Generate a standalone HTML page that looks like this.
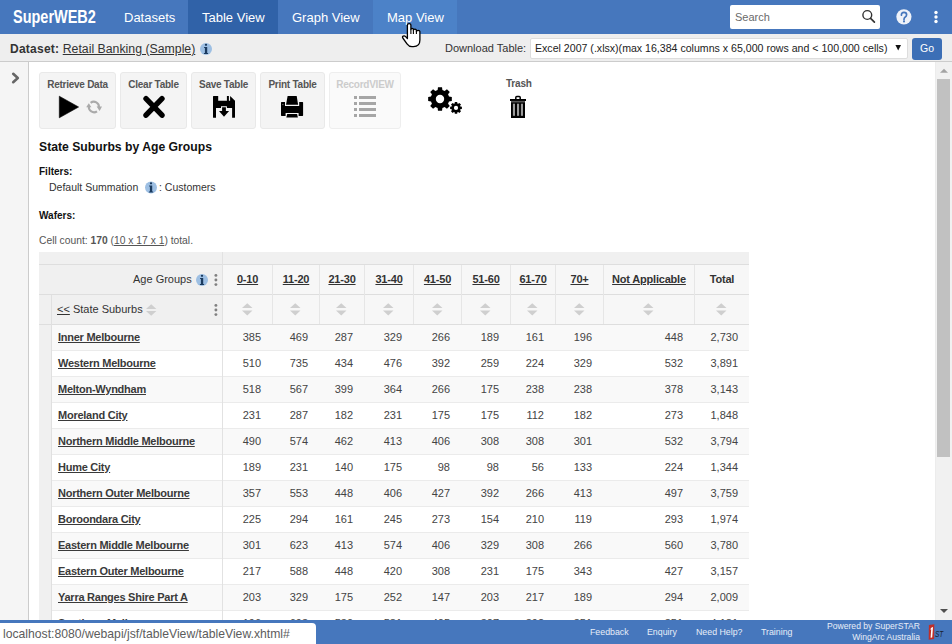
<!DOCTYPE html>
<html><head><meta charset="utf-8">
<style>
*{box-sizing:border-box;margin:0;padding:0}
html,body{width:952px;height:644px;overflow:hidden;background:#fff;font-family:"Liberation Sans",sans-serif;color:#333}
.a{position:absolute;white-space:nowrap}
#nav{position:absolute;left:0;top:0;width:952px;height:34px;background:#4677bd}
.tab{position:absolute;top:0;height:34px;color:#fff;font-size:13px;line-height:34px;padding-top:1px}
#sub{position:absolute;left:0;top:34px;width:952px;height:28px;background:#eee;border-bottom:1px solid #ccc}
#side{position:absolute;left:0;top:62px;width:29px;height:558px;background:#f5f5f5;border-right:1px solid #ccc}
#sb{position:absolute;left:935px;top:62px;width:17px;height:558px;background:#f1f1f1;border-left:1px solid #ececec}
.btn{position:absolute;top:72px;height:57px;background:#f4f4f4;border:1px solid #e9e9e9;border-radius:3px}
.bl{position:absolute;top:5.5px;left:0;width:100%;text-align:center;font-size:10px;font-weight:bold;color:#555;line-height:12px;letter-spacing:-0.25px}
#foot{position:absolute;left:0;top:620px;width:952px;height:24px;background:#4677bd}
.fl{position:absolute;color:#e8eef8;font-size:8.8px;line-height:12px}
table{position:absolute;left:39px;top:252px;border-collapse:collapse;table-layout:fixed;font-size:11px}
td{padding:0;border:1px solid #e4e4e4;white-space:nowrap;overflow:hidden}
.th{font-size:11px;line-height:14px;color:#333}
.hb{font-weight:bold;letter-spacing:-0.2px}
.u{text-decoration:underline}
.td{font-size:11px;line-height:16px;color:#444}
.rh{font-weight:bold;text-decoration:underline;color:#3a3a3a;letter-spacing:-0.25px}
</style></head><body>
<div id="nav">
  <div class="a" style="left:13px;top:5px;font-size:18.7px;font-weight:bold;color:#fff;line-height:24px;transform:scaleX(0.775);transform-origin:0 0">SuperWEB2</div>
  <div class="tab" style="left:110px;width:78px;padding-left:14px">Datasets</div>
  <div class="tab" style="left:188px;width:90px;background:#3062a8;padding-left:14px">Table View</div>
  <div class="tab" style="left:278px;width:95px;padding-left:14px">Graph View</div>
  <div class="tab" style="left:373px;width:84px;background:#4c82c8;padding-left:14px">Map View</div>
  <div class="a" style="left:730px;top:5px;width:150px;height:24px;background:#fff;border-radius:2px"></div>
  <div class="a" style="left:735px;top:5px;font-size:11px;line-height:24px;color:#6a6a6a">Search</div>
</div>
<div id="sub">
  <div class="a" style="left:10px;top:8px;font-size:12px;line-height:14px;color:#333"><b style="letter-spacing:0.25px">Dataset:</b> <span style="text-decoration:underline;font-size:12.3px">Retail Banking (Sample)</span></div>
  <div class="a" style="left:445px;top:7px;font-size:11px;line-height:14px;color:#333">Download Table:</div>
  <div class="a" style="left:530px;top:4px;width:378px;height:21px;background:#fff;border:1px solid #ddd;border-radius:2px"></div>
  <div class="a" style="left:535px;top:7px;font-size:10.6px;line-height:14px;color:#222">Excel 2007 (.xlsx)(max 16,384 columns x 65,000 rows and &lt; 100,000 cells)</div>
  <div class="a" style="left:912px;top:4px;width:30px;height:22px;background:#3c6fb6;border-radius:3px;color:#fff;font-size:10.5px;line-height:20px;text-align:center">Go</div>
</div>
<div id="side"></div>
<div id="sb"></div>

<div class="btn" style="left:39px;width:77px"><div class="bl">Retrieve Data</div></div>
<div class="btn" style="left:120px;width:67px"><div class="bl">Clear Table</div></div>
<div class="btn" style="left:191px;width:65px"><div class="bl">Save Table</div></div>
<div class="btn" style="left:260px;width:65px"><div class="bl">Print Table</div></div>
<div class="btn" style="left:329px;width:72px;background:#fafafa;border-color:#eee"><div class="bl" style="color:#ccc">RecordVIEW</div></div>
<div class="a" style="left:506px;top:78px;font-size:10px;font-weight:bold;color:#555;line-height:12px;letter-spacing:-0.2px">Trash</div>

<div class="a" style="left:39px;top:140px;font-size:12.2px;font-weight:bold;color:#111;line-height:14px">State Suburbs by Age Groups</div>
<div class="a" style="left:39px;top:166px;font-size:10px;font-weight:bold;color:#111;line-height:12px">Filters:</div>
<div class="a" style="left:49px;top:180px;font-size:10.5px;color:#333;line-height:14px">Default Summation</div>
<div class="a" style="left:159px;top:180px;font-size:10.5px;color:#333;line-height:14px">: Customers</div>
<div class="a" style="left:39px;top:210px;font-size:10px;font-weight:bold;color:#111;line-height:12px">Wafers:</div>
<div class="a" style="left:39px;top:234px;font-size:10.3px;color:#555;line-height:14px">Cell count: <b>170</b> (<u>10 x 17 x 1</u>) total.</div>

<div class="a" style="left:39px;top:252px;width:710px;height:12px;background:#f0f0f0"></div>
<div class="a" style="left:39px;top:265px;width:183px;height:59px;background:#f0f0f0"></div>
<div class="a" style="left:223px;top:265px;width:526px;height:59px;background:#f7f7f7"></div>
<div class="a" style="left:52px;top:325px;width:697px;height:25px;background:#f9f9f9"></div>
<div class="a" style="left:52px;top:351px;width:697px;height:25px;background:#fff"></div>
<div class="a" style="left:52px;top:377px;width:697px;height:25px;background:#f9f9f9"></div>
<div class="a" style="left:52px;top:403px;width:697px;height:25px;background:#fff"></div>
<div class="a" style="left:52px;top:429px;width:697px;height:25px;background:#f9f9f9"></div>
<div class="a" style="left:52px;top:455px;width:697px;height:25px;background:#fff"></div>
<div class="a" style="left:52px;top:481px;width:697px;height:25px;background:#f9f9f9"></div>
<div class="a" style="left:52px;top:507px;width:697px;height:25px;background:#fff"></div>
<div class="a" style="left:52px;top:533px;width:697px;height:25px;background:#f9f9f9"></div>
<div class="a" style="left:52px;top:559px;width:697px;height:25px;background:#fff"></div>
<div class="a" style="left:52px;top:585px;width:697px;height:25px;background:#f9f9f9"></div>
<div class="a" style="left:52px;top:611px;width:697px;height:25px;background:#fff"></div>
<div class="a" style="left:39px;top:325px;width:12px;height:295px;background:#f0f0f0"></div>
<div class="a" style="left:39px;top:264px;width:710px;height:1px;background:#dedede"></div>
<div class="a" style="left:39px;top:294px;width:710px;height:1px;background:#dedede"></div>
<div class="a" style="left:39px;top:324px;width:710px;height:1px;background:#dedede"></div>
<div class="a" style="left:52px;top:350px;width:697px;height:1px;background:#ebebeb"></div>
<div class="a" style="left:52px;top:376px;width:697px;height:1px;background:#ebebeb"></div>
<div class="a" style="left:52px;top:402px;width:697px;height:1px;background:#ebebeb"></div>
<div class="a" style="left:52px;top:428px;width:697px;height:1px;background:#ebebeb"></div>
<div class="a" style="left:52px;top:454px;width:697px;height:1px;background:#ebebeb"></div>
<div class="a" style="left:52px;top:480px;width:697px;height:1px;background:#ebebeb"></div>
<div class="a" style="left:52px;top:506px;width:697px;height:1px;background:#ebebeb"></div>
<div class="a" style="left:52px;top:532px;width:697px;height:1px;background:#ebebeb"></div>
<div class="a" style="left:52px;top:558px;width:697px;height:1px;background:#ebebeb"></div>
<div class="a" style="left:52px;top:584px;width:697px;height:1px;background:#ebebeb"></div>
<div class="a" style="left:52px;top:610px;width:697px;height:1px;background:#ebebeb"></div>
<div class="a" style="left:52px;top:636px;width:697px;height:1px;background:#ebebeb"></div>
<div class="a" style="left:222px;top:252px;width:1px;height:368px;background:#e2e2e2"></div>
<div class="a" style="left:51px;top:295px;width:1px;height:325px;background:#e0e0e0"></div>
<div class="a" style="left:272px;top:265px;width:1px;height:59px;background:#e6e6e6"></div>
<div class="a" style="left:319px;top:265px;width:1px;height:59px;background:#e6e6e6"></div>
<div class="a" style="left:364px;top:265px;width:1px;height:59px;background:#e6e6e6"></div>
<div class="a" style="left:413px;top:265px;width:1px;height:59px;background:#e6e6e6"></div>
<div class="a" style="left:461px;top:265px;width:1px;height:59px;background:#e6e6e6"></div>
<div class="a" style="left:510px;top:265px;width:1px;height:59px;background:#e6e6e6"></div>
<div class="a" style="left:555px;top:265px;width:1px;height:59px;background:#e6e6e6"></div>
<div class="a" style="left:603px;top:265px;width:1px;height:59px;background:#e6e6e6"></div>
<div class="a" style="left:694px;top:265px;width:1px;height:59px;background:#e6e6e6"></div>
<div class="a th" style="left:133px;top:272px">Age Groups</div>
<div class="a th" style="left:57px;top:302px"><u>&lt;&lt;</u> State Suburbs</div>
<div class="a th hb u" style="left:223px;top:272px;width:49px;text-align:center">0-10</div>
<svg class="a" style="left:241.5px;top:302.5px" width="11" height="13" viewBox="0 0 11 13"><path d="M5.25 0.3 L10.5 5.1 L0 5.1 Z M0 7.6 L10.5 7.6 L5.25 12.6 Z" fill="#cfcfcf"/></svg>
<div class="a th hb u" style="left:273px;top:272px;width:46px;text-align:center">11-20</div>
<svg class="a" style="left:290.0px;top:302.5px" width="11" height="13" viewBox="0 0 11 13"><path d="M5.25 0.3 L10.5 5.1 L0 5.1 Z M0 7.6 L10.5 7.6 L5.25 12.6 Z" fill="#cfcfcf"/></svg>
<div class="a th hb u" style="left:320px;top:272px;width:44px;text-align:center">21-30</div>
<svg class="a" style="left:336.0px;top:302.5px" width="11" height="13" viewBox="0 0 11 13"><path d="M5.25 0.3 L10.5 5.1 L0 5.1 Z M0 7.6 L10.5 7.6 L5.25 12.6 Z" fill="#cfcfcf"/></svg>
<div class="a th hb u" style="left:365px;top:272px;width:48px;text-align:center">31-40</div>
<svg class="a" style="left:383.0px;top:302.5px" width="11" height="13" viewBox="0 0 11 13"><path d="M5.25 0.3 L10.5 5.1 L0 5.1 Z M0 7.6 L10.5 7.6 L5.25 12.6 Z" fill="#cfcfcf"/></svg>
<div class="a th hb u" style="left:414px;top:272px;width:47px;text-align:center">41-50</div>
<svg class="a" style="left:431.5px;top:302.5px" width="11" height="13" viewBox="0 0 11 13"><path d="M5.25 0.3 L10.5 5.1 L0 5.1 Z M0 7.6 L10.5 7.6 L5.25 12.6 Z" fill="#cfcfcf"/></svg>
<div class="a th hb u" style="left:462px;top:272px;width:48px;text-align:center">51-60</div>
<svg class="a" style="left:480.0px;top:302.5px" width="11" height="13" viewBox="0 0 11 13"><path d="M5.25 0.3 L10.5 5.1 L0 5.1 Z M0 7.6 L10.5 7.6 L5.25 12.6 Z" fill="#cfcfcf"/></svg>
<div class="a th hb u" style="left:511px;top:272px;width:44px;text-align:center">61-70</div>
<svg class="a" style="left:527.0px;top:302.5px" width="11" height="13" viewBox="0 0 11 13"><path d="M5.25 0.3 L10.5 5.1 L0 5.1 Z M0 7.6 L10.5 7.6 L5.25 12.6 Z" fill="#cfcfcf"/></svg>
<div class="a th hb u" style="left:556px;top:272px;width:47px;text-align:center">70+</div>
<svg class="a" style="left:573.5px;top:302.5px" width="11" height="13" viewBox="0 0 11 13"><path d="M5.25 0.3 L10.5 5.1 L0 5.1 Z M0 7.6 L10.5 7.6 L5.25 12.6 Z" fill="#cfcfcf"/></svg>
<div class="a th hb u" style="left:604px;top:272px;width:90px;text-align:center">Not Applicable</div>
<svg class="a" style="left:643.0px;top:302.5px" width="11" height="13" viewBox="0 0 11 13"><path d="M5.25 0.3 L10.5 5.1 L0 5.1 Z M0 7.6 L10.5 7.6 L5.25 12.6 Z" fill="#cfcfcf"/></svg>
<div class="a th hb" style="left:695px;top:272px;width:54px;text-align:center">Total</div>
<svg class="a" style="left:716.0px;top:302.5px" width="11" height="13" viewBox="0 0 11 13"><path d="M5.25 0.3 L10.5 5.1 L0 5.1 Z M0 7.6 L10.5 7.6 L5.25 12.6 Z" fill="#cfcfcf"/></svg>
<div class="a td rh" style="left:58px;top:329px">Inner Melbourne</div>
<div class="a td" style="left:192px;top:329px;width:69px;text-align:right">385</div>
<div class="a td" style="left:239px;top:329px;width:69px;text-align:right">469</div>
<div class="a td" style="left:284px;top:329px;width:69px;text-align:right">287</div>
<div class="a td" style="left:333px;top:329px;width:69px;text-align:right">329</div>
<div class="a td" style="left:381px;top:329px;width:69px;text-align:right">266</div>
<div class="a td" style="left:430px;top:329px;width:69px;text-align:right">189</div>
<div class="a td" style="left:475px;top:329px;width:69px;text-align:right">161</div>
<div class="a td" style="left:523px;top:329px;width:69px;text-align:right">196</div>
<div class="a td" style="left:614px;top:329px;width:69px;text-align:right">448</div>
<div class="a td" style="left:669px;top:329px;width:69px;text-align:right">2,730</div>
<div class="a td rh" style="left:58px;top:355px">Western Melbourne</div>
<div class="a td" style="left:192px;top:355px;width:69px;text-align:right">510</div>
<div class="a td" style="left:239px;top:355px;width:69px;text-align:right">735</div>
<div class="a td" style="left:284px;top:355px;width:69px;text-align:right">434</div>
<div class="a td" style="left:333px;top:355px;width:69px;text-align:right">476</div>
<div class="a td" style="left:381px;top:355px;width:69px;text-align:right">392</div>
<div class="a td" style="left:430px;top:355px;width:69px;text-align:right">259</div>
<div class="a td" style="left:475px;top:355px;width:69px;text-align:right">224</div>
<div class="a td" style="left:523px;top:355px;width:69px;text-align:right">329</div>
<div class="a td" style="left:614px;top:355px;width:69px;text-align:right">532</div>
<div class="a td" style="left:669px;top:355px;width:69px;text-align:right">3,891</div>
<div class="a td rh" style="left:58px;top:381px">Melton-Wyndham</div>
<div class="a td" style="left:192px;top:381px;width:69px;text-align:right">518</div>
<div class="a td" style="left:239px;top:381px;width:69px;text-align:right">567</div>
<div class="a td" style="left:284px;top:381px;width:69px;text-align:right">399</div>
<div class="a td" style="left:333px;top:381px;width:69px;text-align:right">364</div>
<div class="a td" style="left:381px;top:381px;width:69px;text-align:right">266</div>
<div class="a td" style="left:430px;top:381px;width:69px;text-align:right">175</div>
<div class="a td" style="left:475px;top:381px;width:69px;text-align:right">238</div>
<div class="a td" style="left:523px;top:381px;width:69px;text-align:right">238</div>
<div class="a td" style="left:614px;top:381px;width:69px;text-align:right">378</div>
<div class="a td" style="left:669px;top:381px;width:69px;text-align:right">3,143</div>
<div class="a td rh" style="left:58px;top:407px">Moreland City</div>
<div class="a td" style="left:192px;top:407px;width:69px;text-align:right">231</div>
<div class="a td" style="left:239px;top:407px;width:69px;text-align:right">287</div>
<div class="a td" style="left:284px;top:407px;width:69px;text-align:right">182</div>
<div class="a td" style="left:333px;top:407px;width:69px;text-align:right">231</div>
<div class="a td" style="left:381px;top:407px;width:69px;text-align:right">175</div>
<div class="a td" style="left:430px;top:407px;width:69px;text-align:right">175</div>
<div class="a td" style="left:475px;top:407px;width:69px;text-align:right">112</div>
<div class="a td" style="left:523px;top:407px;width:69px;text-align:right">182</div>
<div class="a td" style="left:614px;top:407px;width:69px;text-align:right">273</div>
<div class="a td" style="left:669px;top:407px;width:69px;text-align:right">1,848</div>
<div class="a td rh" style="left:58px;top:433px">Northern Middle Melbourne</div>
<div class="a td" style="left:192px;top:433px;width:69px;text-align:right">490</div>
<div class="a td" style="left:239px;top:433px;width:69px;text-align:right">574</div>
<div class="a td" style="left:284px;top:433px;width:69px;text-align:right">462</div>
<div class="a td" style="left:333px;top:433px;width:69px;text-align:right">413</div>
<div class="a td" style="left:381px;top:433px;width:69px;text-align:right">406</div>
<div class="a td" style="left:430px;top:433px;width:69px;text-align:right">308</div>
<div class="a td" style="left:475px;top:433px;width:69px;text-align:right">308</div>
<div class="a td" style="left:523px;top:433px;width:69px;text-align:right">301</div>
<div class="a td" style="left:614px;top:433px;width:69px;text-align:right">532</div>
<div class="a td" style="left:669px;top:433px;width:69px;text-align:right">3,794</div>
<div class="a td rh" style="left:58px;top:459px">Hume City</div>
<div class="a td" style="left:192px;top:459px;width:69px;text-align:right">189</div>
<div class="a td" style="left:239px;top:459px;width:69px;text-align:right">231</div>
<div class="a td" style="left:284px;top:459px;width:69px;text-align:right">140</div>
<div class="a td" style="left:333px;top:459px;width:69px;text-align:right">175</div>
<div class="a td" style="left:381px;top:459px;width:69px;text-align:right">98</div>
<div class="a td" style="left:430px;top:459px;width:69px;text-align:right">98</div>
<div class="a td" style="left:475px;top:459px;width:69px;text-align:right">56</div>
<div class="a td" style="left:523px;top:459px;width:69px;text-align:right">133</div>
<div class="a td" style="left:614px;top:459px;width:69px;text-align:right">224</div>
<div class="a td" style="left:669px;top:459px;width:69px;text-align:right">1,344</div>
<div class="a td rh" style="left:58px;top:485px">Northern Outer Melbourne</div>
<div class="a td" style="left:192px;top:485px;width:69px;text-align:right">357</div>
<div class="a td" style="left:239px;top:485px;width:69px;text-align:right">553</div>
<div class="a td" style="left:284px;top:485px;width:69px;text-align:right">448</div>
<div class="a td" style="left:333px;top:485px;width:69px;text-align:right">406</div>
<div class="a td" style="left:381px;top:485px;width:69px;text-align:right">427</div>
<div class="a td" style="left:430px;top:485px;width:69px;text-align:right">392</div>
<div class="a td" style="left:475px;top:485px;width:69px;text-align:right">266</div>
<div class="a td" style="left:523px;top:485px;width:69px;text-align:right">413</div>
<div class="a td" style="left:614px;top:485px;width:69px;text-align:right">497</div>
<div class="a td" style="left:669px;top:485px;width:69px;text-align:right">3,759</div>
<div class="a td rh" style="left:58px;top:511px">Boroondara City</div>
<div class="a td" style="left:192px;top:511px;width:69px;text-align:right">225</div>
<div class="a td" style="left:239px;top:511px;width:69px;text-align:right">294</div>
<div class="a td" style="left:284px;top:511px;width:69px;text-align:right">161</div>
<div class="a td" style="left:333px;top:511px;width:69px;text-align:right">245</div>
<div class="a td" style="left:381px;top:511px;width:69px;text-align:right">273</div>
<div class="a td" style="left:430px;top:511px;width:69px;text-align:right">154</div>
<div class="a td" style="left:475px;top:511px;width:69px;text-align:right">210</div>
<div class="a td" style="left:523px;top:511px;width:69px;text-align:right">119</div>
<div class="a td" style="left:614px;top:511px;width:69px;text-align:right">293</div>
<div class="a td" style="left:669px;top:511px;width:69px;text-align:right">1,974</div>
<div class="a td rh" style="left:58px;top:537px">Eastern Middle Melbourne</div>
<div class="a td" style="left:192px;top:537px;width:69px;text-align:right">301</div>
<div class="a td" style="left:239px;top:537px;width:69px;text-align:right">623</div>
<div class="a td" style="left:284px;top:537px;width:69px;text-align:right">413</div>
<div class="a td" style="left:333px;top:537px;width:69px;text-align:right">574</div>
<div class="a td" style="left:381px;top:537px;width:69px;text-align:right">406</div>
<div class="a td" style="left:430px;top:537px;width:69px;text-align:right">329</div>
<div class="a td" style="left:475px;top:537px;width:69px;text-align:right">308</div>
<div class="a td" style="left:523px;top:537px;width:69px;text-align:right">266</div>
<div class="a td" style="left:614px;top:537px;width:69px;text-align:right">560</div>
<div class="a td" style="left:669px;top:537px;width:69px;text-align:right">3,780</div>
<div class="a td rh" style="left:58px;top:563px">Eastern Outer Melbourne</div>
<div class="a td" style="left:192px;top:563px;width:69px;text-align:right">217</div>
<div class="a td" style="left:239px;top:563px;width:69px;text-align:right">588</div>
<div class="a td" style="left:284px;top:563px;width:69px;text-align:right">448</div>
<div class="a td" style="left:333px;top:563px;width:69px;text-align:right">420</div>
<div class="a td" style="left:381px;top:563px;width:69px;text-align:right">308</div>
<div class="a td" style="left:430px;top:563px;width:69px;text-align:right">231</div>
<div class="a td" style="left:475px;top:563px;width:69px;text-align:right">175</div>
<div class="a td" style="left:523px;top:563px;width:69px;text-align:right">343</div>
<div class="a td" style="left:614px;top:563px;width:69px;text-align:right">427</div>
<div class="a td" style="left:669px;top:563px;width:69px;text-align:right">3,157</div>
<div class="a td rh" style="left:58px;top:589px">Yarra Ranges Shire Part A</div>
<div class="a td" style="left:192px;top:589px;width:69px;text-align:right">203</div>
<div class="a td" style="left:239px;top:589px;width:69px;text-align:right">329</div>
<div class="a td" style="left:284px;top:589px;width:69px;text-align:right">175</div>
<div class="a td" style="left:333px;top:589px;width:69px;text-align:right">252</div>
<div class="a td" style="left:381px;top:589px;width:69px;text-align:right">147</div>
<div class="a td" style="left:430px;top:589px;width:69px;text-align:right">203</div>
<div class="a td" style="left:475px;top:589px;width:69px;text-align:right">217</div>
<div class="a td" style="left:523px;top:589px;width:69px;text-align:right">189</div>
<div class="a td" style="left:614px;top:589px;width:69px;text-align:right">294</div>
<div class="a td" style="left:669px;top:589px;width:69px;text-align:right">2,009</div>
<div class="a td rh" style="left:58px;top:615px">Southern Melbourne</div>
<div class="a td" style="left:192px;top:615px;width:69px;text-align:right">196</div>
<div class="a td" style="left:239px;top:615px;width:69px;text-align:right">693</div>
<div class="a td" style="left:284px;top:615px;width:69px;text-align:right">530</div>
<div class="a td" style="left:333px;top:615px;width:69px;text-align:right">581</div>
<div class="a td" style="left:381px;top:615px;width:69px;text-align:right">405</div>
<div class="a td" style="left:430px;top:615px;width:69px;text-align:right">307</div>
<div class="a td" style="left:475px;top:615px;width:69px;text-align:right">392</div>
<div class="a td" style="left:523px;top:615px;width:69px;text-align:right">351</div>
<div class="a td" style="left:614px;top:615px;width:69px;text-align:right">351</div>
<div class="a td" style="left:669px;top:615px;width:69px;text-align:right">4,181</div>
<div id="foot">
  <div class="fl" style="left:590px;top:6px">Feedback</div>
  <div class="fl" style="left:647px;top:6px">Enquiry</div>
  <div class="fl" style="left:696px;top:6px">Need Help?</div>
  <div class="fl" style="left:761px;top:6px">Training</div>
  <div class="fl" style="left:800px;top:1px;width:120px;text-align:right;font-size:8.6px;line-height:10.5px">Powered by SuperSTAR<br>WingArc Australia</div>
</div>
<div class="a" style="left:0;top:623px;width:316px;height:21px;background:#fff;border-top-right-radius:4px;font-size:12.2px;line-height:23px;color:#5c5c5c;padding-left:3px">localhost:8080/webapi/jsf/tableView/tableView.xhtml#</div>
<svg class="a" style="left:0;top:0" width="952" height="644" viewBox="0 0 952 644">
<path d="M13.2,73.8 L17.8,78 L13.2,82.2" fill="none" stroke="#666" stroke-width="2.6" stroke-linecap="round" stroke-linejoin="round"/>
<path d="M59.3,96.2 L78.6,107 L59.3,117.8 Z" fill="#000" stroke="#000" stroke-width="0.6" stroke-linejoin="round"/>
<path d="M90.6,102.8 A5.2,5.2 0 0 1 98.9,107.6" fill="none" stroke="#aaa" stroke-width="2.1"/>
<path d="M96.6,106.6 L102,106.6 L99.6,110.9 Z" fill="#aaa"/>
<path d="M97,111.3 A5.2,5.2 0 0 1 88.9,106.2" fill="none" stroke="#aaa" stroke-width="2.1"/>
<path d="M86.2,107.3 L91.4,107.3 L88.8,103.2 Z" fill="#aaa"/>
<path d="M146,98.6 L162,115.2 M162,98.6 L146,115.2" fill="none" stroke="#000" stroke-width="5.4" stroke-linecap="round"/>
<g transform="translate(213,96)"><path d="M0.6,0 H5.2 V4.7 H13.9 V0 H15.9 V4.7 H17.1 V0 L22,4.7 V21.2 Q22,21.8 21.4,21.8 H19.1 V11.9 H13.9 V10.2 H8 V11.9 H3 V21.8 H0.6 Q0,21.8 0,21.2 V0.6 Q0,0 0.6,0 Z M9.1,11.2 H12.9 V15.1 H16.1 L11,20.8 L6,15.1 H9.1 Z" fill="#000"/></g>
<path d="M281.6,102 H285 V106.1 H299.2 V102 H302.5 Q303.1,102 303.1,102.6 V115.3 Q303.1,115.9 302.5,115.9 H298.6 V113 H285.6 V115.9 H281.6 Q281,115.9 281,115.3 V102.6 Q281,102 281.6,102 Z" fill="#000"/>
<path d="M287.6,96.1 H296.7 L298.1,104.8 H286 Z" fill="#000"/>
<path d="M287.2,114.1 H297.1 L297.9,117.6 H286.3 Z" fill="#000"/>
<rect x="282.2" y="104" width="1.3" height="1.1" fill="#666"/>
<rect x="354" y="96" width="3" height="3" fill="#a6a6a6"/><rect x="359" y="96" width="17" height="3" fill="#a6a6a6"/>
<rect x="354" y="102" width="3" height="3" fill="#a6a6a6"/><rect x="359" y="102" width="17" height="3" fill="#a6a6a6"/>
<rect x="354" y="108" width="3" height="3" fill="#a6a6a6"/><rect x="359" y="108" width="17" height="3" fill="#a6a6a6"/>
<rect x="354" y="114" width="3" height="3" fill="#a6a6a6"/><rect x="359" y="114" width="17" height="3" fill="#a6a6a6"/>
<path d="M437.61,90.01 L437.97,87.17 L442.03,87.17 L442.39,90.01 L444.66,90.95 L446.93,89.20 L449.80,92.07 L448.05,94.34 L448.99,96.61 L451.83,96.97 L451.83,101.03 L448.99,101.39 L448.05,103.66 L449.80,105.93 L446.93,108.80 L444.66,107.05 L442.39,107.99 L442.03,110.83 L437.97,110.83 L437.61,107.99 L435.34,107.05 L433.07,108.80 L430.20,105.93 L431.95,103.66 L431.01,101.39 L428.17,101.03 L428.17,96.97 L431.01,96.61 L431.95,94.34 L430.20,92.07 L433.07,89.20 L435.34,90.95 Z M444.20,99.00 A4.2,4.2 0 1 0 435.80,99.00 A4.2,4.2 0 1 0 444.20,99.00 Z" fill="#000" fill-rule="evenodd"/>
<path d="M454.64,103.51 L454.81,102.02 L457.19,102.02 L457.36,103.51 L458.15,103.83 L459.32,102.90 L461.00,104.58 L460.07,105.75 L460.39,106.54 L461.88,106.71 L461.88,109.09 L460.39,109.26 L460.07,110.05 L461.00,111.22 L459.32,112.90 L458.15,111.97 L457.36,112.29 L457.19,113.78 L454.81,113.78 L454.64,112.29 L453.85,111.97 L452.68,112.90 L451.00,111.22 L451.93,110.05 L451.61,109.26 L450.12,109.09 L450.12,106.71 L451.61,106.54 L451.93,105.75 L451.00,104.58 L452.68,102.90 L453.85,103.83 Z M458.10,107.90 A2.1,2.1 0 1 0 453.90,107.90 A2.1,2.1 0 1 0 458.10,107.90 Z" fill="#000" fill-rule="evenodd"/>
<path d="M515.8,99.3 V97.6 Q515.8,96.6 516.8,96.6 H519.2 Q520.2,96.6 520.2,97.6 V99.3" fill="none" stroke="#000" stroke-width="1.5"/>
<rect x="510" y="99" width="16" height="2" fill="#000"/>
<rect x="511" y="100.9" width="14" height="1.4" fill="#555"/>
<rect x="511" y="102.2" width="14" height="15.8" fill="#000"/>
<rect x="512.9" y="103.7" width="2.1" height="12.1" fill="#9a9a9a"/>
<rect x="517" y="103.7" width="2.1" height="12.1" fill="#9a9a9a"/>
<rect x="520.9" y="103.7" width="2.1" height="12.1" fill="#9a9a9a"/>
<circle cx="206" cy="49" r="6" fill="#9dbfe3"/><circle cx="206" cy="44.8" r="1.15" fill="#1a3a5e"/><path d="M204.1,47.1 H207.2 V52.9 H208.1 V53.9 H203.9 V52.9 H204.9 V48.1 H204.1 Z" fill="#1a3a5e"/>
<circle cx="151" cy="187.5" r="6" fill="#9dbfe3"/><circle cx="151" cy="183.3" r="1.15" fill="#1a3a5e"/><path d="M149.1,185.6 H152.2 V191.4 H153.1 V192.4 H148.9 V191.4 H149.9 V186.6 H149.1 Z" fill="#1a3a5e"/>
<circle cx="202" cy="280" r="6" fill="#9dbfe3"/><circle cx="202" cy="275.8" r="1.15" fill="#1a3a5e"/><path d="M200.1,278.1 H203.2 V283.9 H204.1 V284.9 H199.9 V283.9 H200.9 V279.1 H200.1 Z" fill="#1a3a5e"/>
<circle cx="215.9" cy="275.4" r="1.45" fill="#808080"/>
<circle cx="215.9" cy="280" r="1.45" fill="#808080"/>
<circle cx="215.9" cy="284.6" r="1.45" fill="#808080"/>
<circle cx="215.9" cy="305.4" r="1.45" fill="#808080"/>
<circle cx="215.9" cy="310" r="1.45" fill="#808080"/>
<circle cx="215.9" cy="314.6" r="1.45" fill="#808080"/>
<path d="M151.2,304.3 L156.4,309 L146,309 Z M146,311 L156.4,311 L151.2,315.7 Z" fill="#cfcfcf"/>
<circle cx="867.3" cy="15" r="4.4" fill="none" stroke="#333" stroke-width="1.4"/><path d="M870.6,18.4 L874.4,22.2" stroke="#333" stroke-width="1.7" stroke-linecap="round"/>
<circle cx="903.9" cy="16.8" r="7.6" fill="#eef2f9"/>
<path d="M901.4,15.2 Q901.3,12.4 904,12.4 Q906.6,12.4 906.6,14.8 Q906.6,16.3 905,17.3 Q904,17.9 904,19.4" fill="none" stroke="#4677bd" stroke-width="1.7" stroke-linecap="round"/>
<circle cx="904" cy="21.4" r="1.05" fill="#4677bd"/>
<circle cx="936" cy="12.5" r="1.7" fill="#fff"/>
<circle cx="936" cy="17" r="1.7" fill="#fff"/>
<circle cx="936" cy="21.5" r="1.7" fill="#fff"/>
<path d="M895.4,45 L901,45 L898.2,50.5 Z" fill="#111"/>
<path d="M940,72.8 L944,68.8 L948,72.8 Z" fill="#a3a3a3"/>
<rect x="937" y="79" width="13" height="378" fill="#c1c1c1"/>
<path d="M940,609 L948,609 L944,613 Z" fill="#505050"/>
<path d="M928.9,625 L934.3,624.2 L934.1,639 L928.7,639.7 Z" fill="#bf2f2a"/>
<path d="M931.6,627.5 L933,627.1 L932.2,637.5 L930.6,637.7 L931.2,629.2 L930,629.6 Z" fill="#fff"/>
<text x="935" y="637" font-family="Liberation Sans" font-style="italic" font-size="8.5" textLength="8.3" lengthAdjust="spacingAndGlyphs" fill="#1b2230">ST</text>
<g transform="translate(402,23)"><path d="M5.4,15.5 V2 Q5.4,0.6 7.15,0.6 Q8.9,0.6 8.9,2 V6.5 Q8.9,5.4 10.15,5.4 Q11.4,5.4 11.4,6.5 V7.3 Q11.4,6.2 12.9,6.2 Q14.4,6.2 14.4,7.3 V8.5 Q14.4,7.4 16.15,7.4 Q17.9,7.4 17.9,8.5 V17 Q17.9,23.6 11.5,23.6 H10 Q7,23.6 5,20.8 L0.8,15 Q0,13.7 1.2,13.1 Q2.5,12.5 3.6,13.6 Z" fill="#fff" stroke="#000" stroke-width="1.3" stroke-linejoin="round"/><path d="M8.9,6.5 V10.9 M11.4,7.3 V10.9 M14.4,8.5 V10.9" stroke="#000" stroke-width="1.1"/></g>
</svg>
</body></html>
